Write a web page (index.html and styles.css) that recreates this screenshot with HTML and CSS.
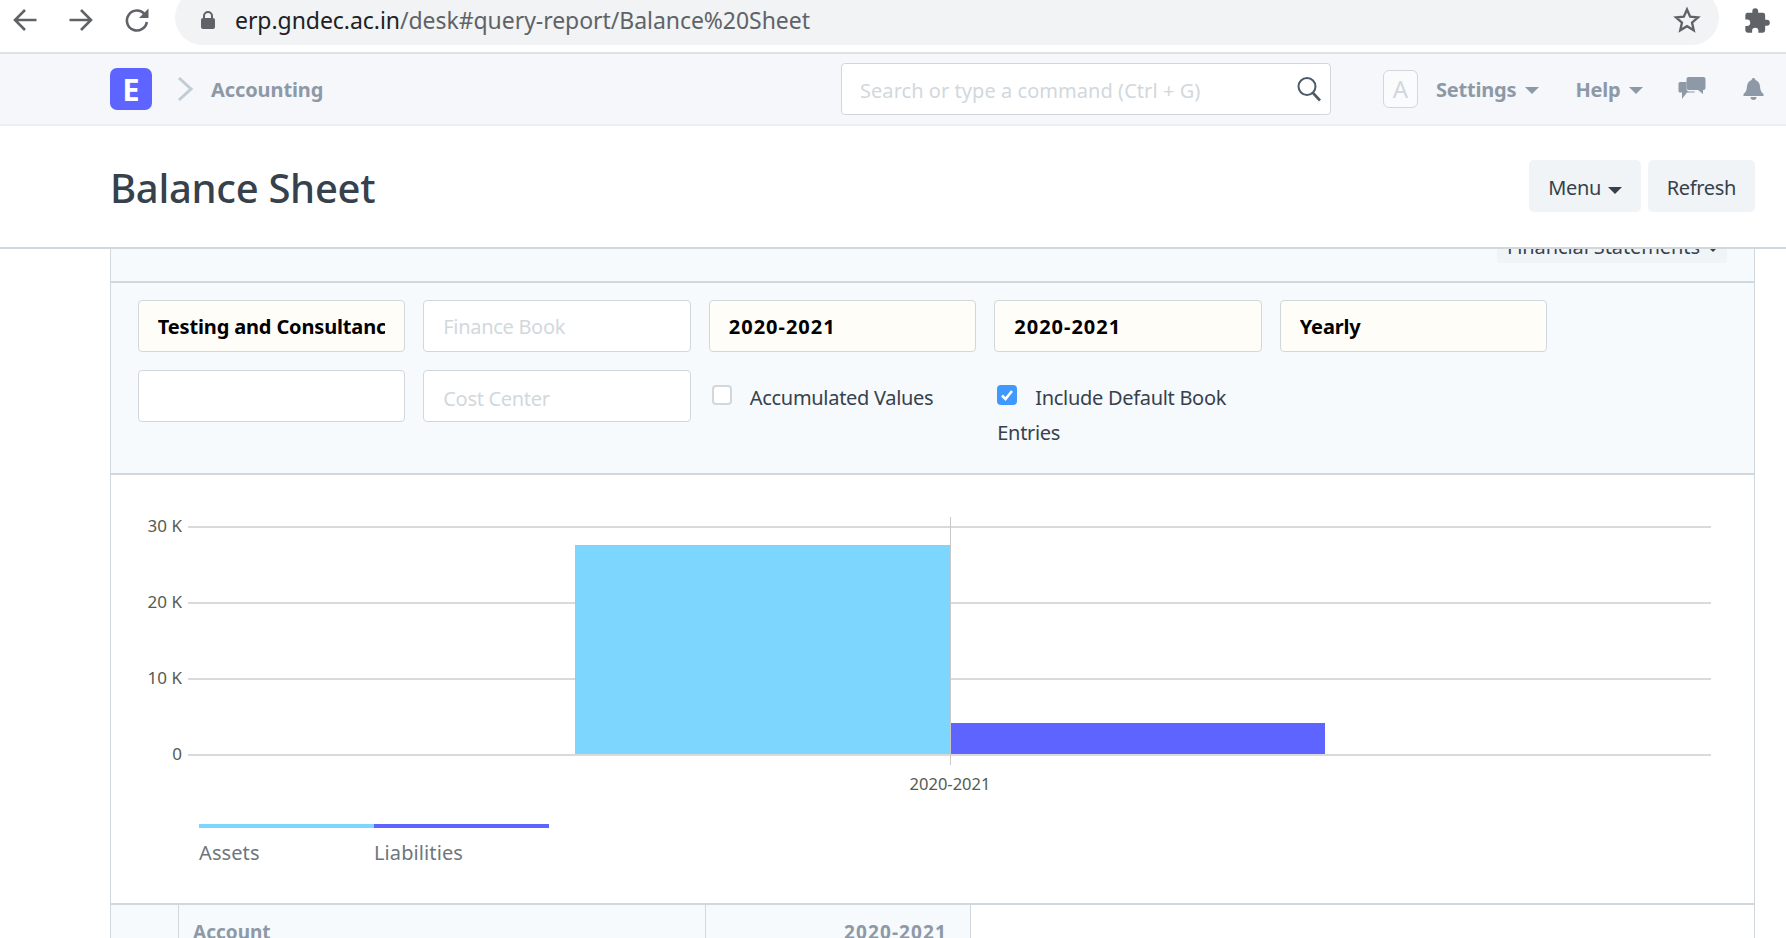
FILE: index.html
```html
<!DOCTYPE html>
<html lang="en">
<head>
    <meta charset="UTF-8">
    <title>Balance Sheet</title>
    <link rel="stylesheet" href="styles.css">
</head>
<body>
    <div class="browser-bar">
        <svg class="tool-icon back" width="26" height="26" viewBox="0 0 26 26"><path d="M24.500 13H3M13 3L3 13l10 10" fill="none" stroke="#5f6368" stroke-width="2.600"/></svg>
        <svg class="tool-icon forward" width="26" height="26" viewBox="0 0 26 26"><path d="M1.500 13H23M13 3l10 10-10 10" fill="none" stroke="#5f6368" stroke-width="2.600"/></svg>
        <svg class="tool-icon reload" width="26" height="26" viewBox="0 0 26 26"><path d="M20.500 7a10 10 0 1 0 2.300 8" fill="none" stroke="#5f6368" stroke-width="2.600"/><path d="M24.500 1.500v9.500H15z" fill="#5f6368"/></svg>
        <div class="url-pill">
            <svg width="16" height="20" viewBox="0 0 16 20"><path d="M4 9V6a4 4 0 0 1 8 0v3" fill="none" stroke="#5f6368" stroke-width="2"/><rect x="1" y="8" width="14" height="11" rx="2" fill="#5f6368"/></svg>
            <span class="url"><b>erp.gndec.ac.in</b>/desk#query-report/Balance%20Sheet</span>
            <svg class="star" width="28" height="28" viewBox="0 0 24 24"><path d="M12 3l2.700 6.200 6.700.6-5.100 4.400 1.500 6.600L12 17.300l-5.800 3.500 1.500-6.600-5.100-4.400 6.700-.6z" fill="none" stroke="#5f6368" stroke-width="2"/></svg>
        </div>
        <svg class="puzzle" width="28" height="28" viewBox="0 0 24 24"><path d="M20.500 11H19V7a2 2 0 0 0-2-2h-4V3.500a2.500 2.500 0 0 0-5 0V5H4a2 2 0 0 0-2 2v3.800h1.500a2.700 2.700 0 0 1 0 5.400H2V20a2 2 0 0 0 2 2h3.800v-1.500a2.700 2.700 0 0 1 5.400 0V22H17a2 2 0 0 0 2-2v-4h1.500a2.500 2.500 0 0 0 0-5z" fill="#5f6368"/></svg>
    </div>

    <nav class="navbar">
        <div class="logo">E</div>
        <svg class="crumb-arrow" width="17" height="26" viewBox="0 0 17 26"><path d="M2 2l12 11L2 24" fill="none" stroke="#c0ccd6" stroke-width="3"/></svg>
        <a class="crumb">Accounting</a>
        <div class="search">
            <input type="text" placeholder="Search or type a command (Ctrl + G)">
            <svg width="28" height="28" viewBox="0 0 28 28"><circle cx="12" cy="11.500" r="8.500" fill="none" stroke="#4c5a67" stroke-width="2"/><path d="M18 18l7 7.500" stroke="#4c5a67" stroke-width="2.600"/></svg>
        </div>
        <div class="avatar">A</div>
        <a class="nav-link settings">Settings<i class="caret"></i></a>
        <a class="nav-link help">Help<i class="caret"></i></a>
        <svg class="chat" width="28" height="23" viewBox="0 0 28 23"><path d="M10.500 0h15a2 2 0 0 1 2 2v9a2 2 0 0 1-2 2H25v4l-5-4h-9.500a2 2 0 0 1-2-2V2a2 2 0 0 1 2-2z" fill="#8d99a6"/><path d="M2 5h6.500v6.500a3 3 0 0 0 3 3H17l-.8 1H9l-5 6.500v-6.500H2a1.500 1.500 0 0 1-1.500-1.500V6.500A1.500 1.500 0 0 1 2 5z" fill="#8d99a6"/></svg>
        <svg class="bell" width="21" height="22" viewBox="0 0 21 22"><path d="M10.500 0a1.800 1.800 0 0 1 1.800 2c3 .9 4.500 3.400 4.700 6.500.2 4 1.500 6 3.500 7.500v2H.5v-2c2-1.500 3.300-3.500 3.500-7.500C4.200 5.400 5.700 2.900 8.700 2a1.800 1.800 0 0 1 1.800-2zM7.500 19h6a3 3 0 0 1-6 0z" fill="#8d99a6"/></svg>
    </nav>

    <header class="page-head">
        <h1>Balance Sheet</h1>
        <div class="page-actions">
            <button class="btn">Menu <i class="caret dark"></i></button>
            <button class="btn">Refresh</button>
        </div>
    </header>

    <main class="layout">
        <div class="inner-toolbar">
            <button class="btn-small">Financial Statements <i class="caret tiny"></i></button>
        </div>

        <form class="filters">
            <input class="field filled" type="text" value="Testing and Consultancy Services">
            <input class="field" type="text" placeholder="Finance Book">
            <input class="field filled digits" type="text" value="2020-2021">
            <input class="field filled digits" type="text" value="2020-2021">
            <input class="field filled" type="text" value="Yearly">
            <input class="field" type="text">
            <input class="field low" type="text" placeholder="Cost Center">
            <label class="check-field"><span class="check"></span>Accumulated Values</label>
            <label class="check-field on"><span class="check"><svg width="20" height="20" viewBox="0 0 20 20"><path d="M5 10.500l3.500 3.500 6.500-8" fill="none" stroke="#fff" stroke-width="2.600"/></svg></span>Include Default Book Entries</label>
        </form>

        <section class="chart">
            <svg width="1642" height="349" viewBox="0 0 1642 349">
                <g stroke="#dadada" stroke-width="2">
                    <line x1="77" x2="1600" y1="52" y2="52"/>
                    <line x1="77" x2="1600" y1="128" y2="128"/>
                    <line x1="77" x2="1600" y1="204" y2="204"/>
                </g>
                <rect x="464" y="70" width="375" height="210" fill="#7cd6fd"/>
                <rect x="839" y="248" width="375" height="32" fill="#5e64ff"/>
                <line x1="77" x2="1600" y1="280" y2="280" stroke="#dadada" stroke-width="2"/>
                <line x1="839.500" x2="839.500" y1="42" y2="290" stroke="#c8c8c8" stroke-width="1"/>
                <g class="y-label" text-anchor="end">
                    <text x="71" y="57">30 K</text>
                    <text x="71" y="133">20 K</text>
                    <text x="71" y="209">10 K</text>
                    <text x="71" y="285">0</text>
                </g>
                <text class="x-label" x="839" y="315" text-anchor="middle">2020-2021</text>
            </svg>
            <div class="legend">
                <div class="legend-item assets">Assets</div>
                <div class="legend-item liabilities">Liabilities</div>
            </div>
        </section>

        <div class="table-head">
            <div class="cell index"></div>
            <div class="cell account">Account</div>
            <div class="cell year">2020-2021</div>
        </div>
    </main>
</body>
</html>
```

FILE: styles.css
```css
* {
    box-sizing: border-box;
}

html, body {
    margin: 0;
    height: 938px;
    overflow: hidden;
}

body {
    font-family: "Noto Sans", Arial, sans-serif;
    background-color: #fff;
    color: #36414c;
}

button, input {
    font-family: inherit;
}

/* browser chrome */
.browser-bar {
    height: 54px;
    display: flex;
    align-items: flex-start;
    border-bottom: 2px solid #dee1e6;
    background-color: #fff;
}

.tool-icon {
    flex: none;
    margin-top: 7px;
}

.back {
    margin-left: 12px;
}

.forward {
    margin-left: 30px;
}

.reload {
    margin-left: 30px;
}

.url-pill {
    margin-left: 25px;
    margin-top: -10px;
    width: 1544px;
    height: 55px;
    display: flex;
    align-items: center;
    padding: 5px 18px 0 25px;
    background-color: #f1f3f4;
    border-radius: 28px;
}

.url {
    margin-left: 19px;
    font-size: 23px;
    color: #5f6368;
    letter-spacing: -0.05px;
    flex: 1;
}

.url b {
    font-weight: 400;
    color: #202124;
}

.puzzle {
    flex: none;
    margin: 7px 0 0 24px;
}

/* app navbar */
.navbar {
    height: 72px;
    display: flex;
    align-items: center;
    padding-left: 110px;
    background-color: #f5f7fa;
    border-bottom: 2px solid #eceff2;
}

.logo {
    width: 42px;
    height: 42px;
    border-radius: 7px;
    background-color: #5e64ff;
    color: #fff;
    font-size: 31px;
    font-weight: 700;
    line-height: 42px;
    text-align: center;
    flex: none;
}

.crumb-arrow {
    flex: none;
    margin-left: 25px;
}

.crumb {
    margin-left: 17px;
    width: 300px;
    flex: none;
    font-size: 20px;
    font-weight: 700;
    color: #8d99a6;
    letter-spacing: -0.1px;
}

.search {
    width: 490px;
    height: 52px;
    margin-left: 330px;
    display: flex;
    align-items: center;
    flex: none;
    padding: 2px 7px 0 18px;
    background-color: #fff;
    border: 1px solid #d1d8dd;
    border-radius: 4px;
}

.search input {
    flex: 1;
    min-width: 0;
    border: 0;
    outline: 0;
    padding: 0;
    font-size: 20px;
    letter-spacing: 0.05px;
}

.search svg {
    margin-top: -2px;
}

.search input::placeholder, .field::placeholder {
    color: #d1d8dd;
    opacity: 1;
}

.avatar {
    width: 35px;
    height: 38px;
    margin-left: 52px;
    flex: none;
    border: 1px solid #d1d8dd;
    border-radius: 6px;
    color: #d1d8dd;
    background-color: #fafbfc;
    font-size: 24px;
    line-height: 36px;
    text-align: center;
}

.nav-link {
    flex: none;
    font-size: 20px;
    font-weight: 700;
    color: #8d99a6;
    letter-spacing: -0.2px;
}

.settings {
    margin-left: 18px;
}

.help {
    margin-left: 36px;
}

.caret {
    display: inline-block;
    width: 0;
    height: 0;
    margin-left: 9px;
    vertical-align: 3px;
    border-top: 7px solid #8d99a6;
    border-left: 7px solid transparent;
    border-right: 7px solid transparent;
}

.caret.dark {
    margin-left: 2px;
    vertical-align: 1px;
    border-top-color: #36414c;
}

.caret.tiny {
    margin-left: 4px;
    vertical-align: 2px;
    border-top: 4px solid #36414c;
    border-left: 4px solid transparent;
    border-right: 4px solid transparent;
}

.chat {
    flex: none;
    margin: -1px 0 0 35px;
}

.bell {
    flex: none;
    margin: -1px 0 0 37px;
}

/* page title */
.page-head {
    height: 123px;
    display: flex;
    align-items: center;
    justify-content: space-between;
    padding: 0 31px 0 110px;
    border-bottom: 2px solid #d1d8dd;
    background-color: #fff;
    position: relative;
    z-index: 1;
}

h1 {
    margin: 1px 0 0;
    font-size: 40px;
    font-weight: 500;
    color: #36414c;
    letter-spacing: -0.3px;
}

.page-actions {
    display: flex;
    gap: 7px;
    margin-top: -2px;
}

.btn {
    height: 52px;
    padding: 3px 19px 0;
    border: 0;
    border-radius: 5px;
    background-color: #f0f4f7;
    color: #36414c;
    font-size: 20px;
    letter-spacing: -0.35px;
}

/* report body */
.layout {
    margin-left: 110px;
    width: 1645px;
    height: 691px;
    border-left: 1px solid #d1d8dd;
    border-right: 1px solid #d1d8dd;
}

.inner-toolbar {
    height: 34px;
    display: flex;
    justify-content: flex-end;
    align-items: flex-end;
    padding: 0 27px 18px 0;
    background-color: #f7fafc;
    border-bottom: 2px solid #d1d8dd;
    overflow: visible;
}

.btn-small {
    height: 40px;
    flex: none;
    width: 230px;
    border: 0;
    border-radius: 4px;
    background-color: #f0f4f7;
    color: #36414c;
    font-size: 20px;
    letter-spacing: -0.1px;
    padding: 6px 0 0;
}

.filters {
    height: 192px;
    display: grid;
    grid-template-columns: repeat(5, 267.5px);
    grid-auto-rows: 52px;
    column-gap: 18px;
    row-gap: 18px;
    padding: 17px 0 0 26.75px;
    background-color: #f7fafc;
    border-bottom: 2px solid #d1d8dd;
}

.field {
    width: 100%;
    height: 52px;
    padding: 0 19px;
    border: 1px solid #d1d8dd;
    border-radius: 4px;
    outline: 0;
    background-color: #fff;
    font-size: 20px;
    letter-spacing: -0.3px;
}

.field.filled {
    background-color: #fffdf7;
    color: #000;
    font-weight: 700;
    letter-spacing: -0.15px;
}

.field.digits {
    letter-spacing: 1px;
}

.field.low {
    padding-top: 5px;
}

.check-field {
    display: block;
    padding: 10px 0 0 3px;
    width: 250px;
    font-size: 20px;
    line-height: 35px;
    color: #36414c;
    letter-spacing: -0.3px;
    white-space: normal;
}

.check {
    display: inline-block;
    width: 20px;
    height: 20px;
    margin-right: 18px;
    vertical-align: 0;
    background-color: #fff;
    border: 2px solid #d1d8dd;
    border-radius: 4px;
}

.on .check {
    background-color: #4099ff;
    border: 0;
}

.check svg {
    display: block;
}

/* chart */
.chart {
    height: 430px;
    background-color: #fff;
    border-bottom: 2px solid #d1d8dd;
}

.chart svg {
    display: block;
}

.y-label text {
    font-size: 17px;
    fill: #555b51;
}

.x-label {
    font-size: 16.5px;
    fill: #555b51;
}

.legend {
    display: flex;
    margin-left: 88px;
}

.legend-item {
    width: 175px;
    padding-top: 10px;
    border-top: 4px solid #7cd6fd;
    font-size: 20px;
    color: #6c7680;
    line-height: 30px;
    letter-spacing: 0.1px;
}

.legend-item.liabilities {
    border-top-color: #5e64ff;
}

.table-head {
    display: flex;
    height: 40px;
}

.cell {
    height: 100%;
    padding: 14px 20px 0 14px;
    background-color: #f7fafc;
    border-right: 1px solid #d1d8dd;
    font-size: 19px;
    font-weight: 700;
    color: #8d99a6;
}

.index {
    width: 68px;
}

.account {
    width: 527px;
}

.year {
    width: 265px;
    padding-right: 23px;
    text-align: right;
    letter-spacing: 1.1px;
}
```
